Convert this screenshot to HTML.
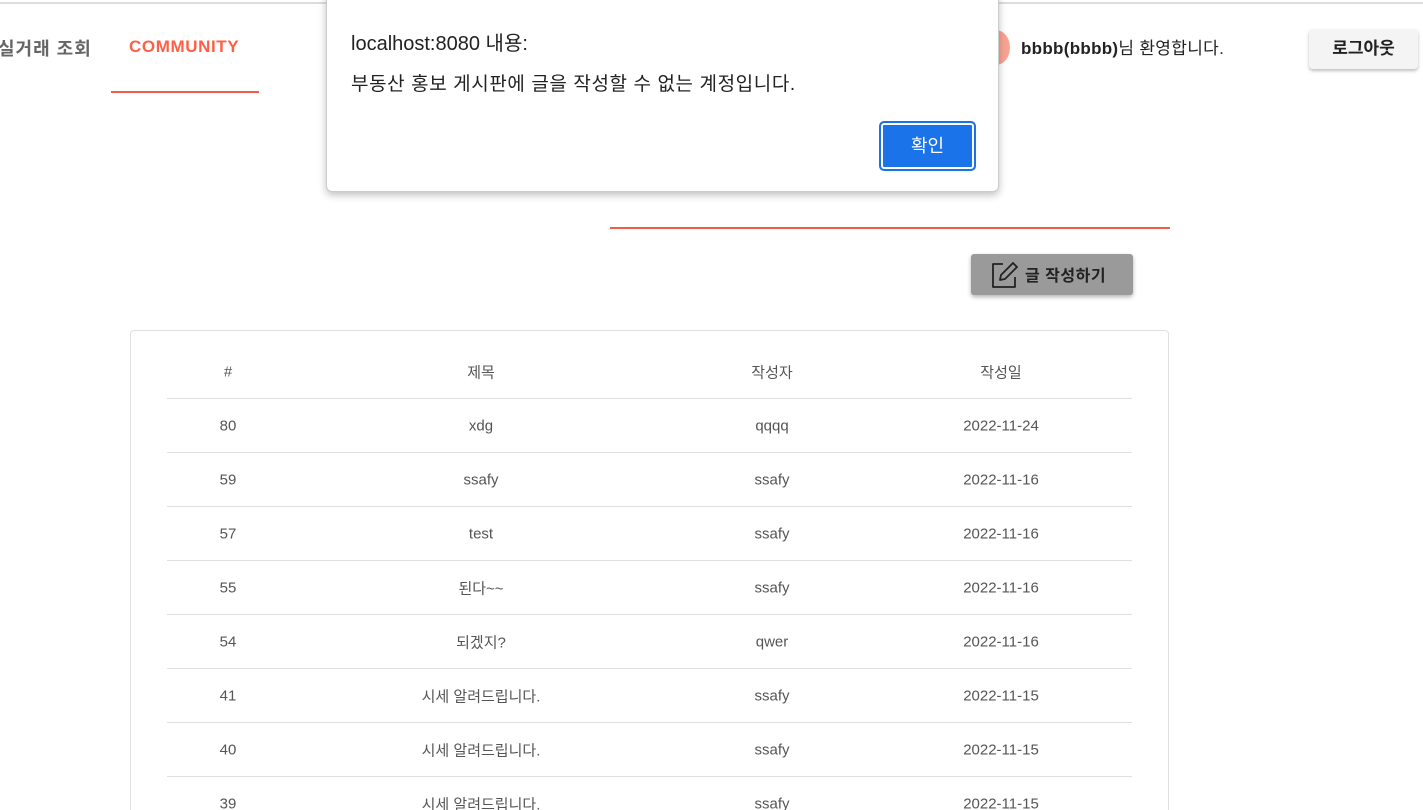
<!DOCTYPE html>
<html><head><meta charset="utf-8"><style>
*{margin:0;padding:0;box-sizing:border-box}
html{width:1423px;height:810px;overflow:hidden}
body{width:1423px;height:810px;overflow:hidden;background:#fff;font-family:"Liberation Sans","Noto Sans CJK KR",sans-serif;position:relative;color:#555}
.abs{position:absolute}
.row{position:absolute;left:167px;width:965px;height:54px;border-bottom:1px solid #e0e0e0;font-size:15px;color:#555}
.row span{position:absolute;top:50%;transform:translate(-50%,-50%);white-space:nowrap}
</style></head><body>
<div class="abs" style="left:0;top:2px;width:1423px;height:2px;background:#ddd"></div>
<div class="abs" style="left:-2px;top:35px;font-size:18px;font-weight:bold;color:#666;letter-spacing:1px">실거래 조회</div>
<div class="abs" style="left:129px;top:37px;font-size:17px;font-weight:bold;color:#ff5f45;letter-spacing:0.6px">COMMUNITY</div>
<div class="abs" style="left:111px;top:91px;width:148px;height:2px;background:#f55c43"></div>
<div class="abs" style="left:982px;top:30px;width:28px;height:35px;border-radius:50%;background:#f9a493"></div>
<div class="abs" style="left:1021px;top:34px;font-size:17px;color:#222;letter-spacing:0.3px"><b>bbbb(bbbb)</b>님 환영합니다.</div>
<div class="abs" style="left:1309px;top:29px;width:109px;height:40px;background:#f4f4f4;border-radius:4px;box-shadow:0 2px 3px rgba(0,0,0,.25);font-size:17px;font-weight:bold;color:#222;text-align:center;line-height:40px">로그아웃</div>
<div class="abs" style="left:610px;top:227px;width:560px;height:2px;background:#f55c43"></div>
<div class="abs" style="left:971px;top:254px;width:162px;height:41px;background:#9a9a9a;border-radius:3px;box-shadow:0 2px 4px rgba(0,0,0,.3);color:#222;font-size:16px;font-weight:bold">
<svg class="abs" style="left:19px;top:6px" width="30" height="30" viewBox="0 0 30 30" fill="none" stroke="#222" stroke-width="1.8" stroke-linejoin="round"><path d="M13 4H3v23h22V17"/><path d="M23 3l4 4-12 12-5 1 1-5z"/></svg>
<span class="abs" style="left:54px;top:8px;letter-spacing:0.5px">글 작성하기</span></div>
<div class="abs" style="left:130px;top:330px;width:1039px;height:490px;border:1px solid #e0e0e0;border-radius:4px"></div>
<div class="row" style="top:345px"><span style="left:61px">#</span><span style="left:314px">제목</span><span style="left:605px">작성자</span><span style="left:834px">작성일</span></div>
<div class="row" style="top:399px"><span style="left:61px">80</span><span style="left:314px">xdg</span><span style="left:605px">qqqq</span><span style="left:834px">2022-11-24</span></div>
<div class="row" style="top:453px"><span style="left:61px">59</span><span style="left:314px">ssafy</span><span style="left:605px">ssafy</span><span style="left:834px">2022-11-16</span></div>
<div class="row" style="top:507px"><span style="left:61px">57</span><span style="left:314px">test</span><span style="left:605px">ssafy</span><span style="left:834px">2022-11-16</span></div>
<div class="row" style="top:561px"><span style="left:61px">55</span><span style="left:314px">된다~~</span><span style="left:605px">ssafy</span><span style="left:834px">2022-11-16</span></div>
<div class="row" style="top:615px"><span style="left:61px">54</span><span style="left:314px">되겠지?</span><span style="left:605px">qwer</span><span style="left:834px">2022-11-16</span></div>
<div class="row" style="top:669px"><span style="left:61px">41</span><span style="left:314px">시세 알려드립니다.</span><span style="left:605px">ssafy</span><span style="left:834px">2022-11-15</span></div>
<div class="row" style="top:723px"><span style="left:61px">40</span><span style="left:314px">시세 알려드립니다.</span><span style="left:605px">ssafy</span><span style="left:834px">2022-11-15</span></div>
<div class="row" style="top:777px;border-bottom:none"><span style="left:61px">39</span><span style="left:314px">시세 알려드립니다.</span><span style="left:605px">ssafy</span><span style="left:834px">2022-11-15</span></div>
<div class="abs" style="left:326px;top:-5px;width:673px;height:197px;background:#fff;border:1px solid #ccc;border-radius:0 0 6px 6px;box-shadow:0 3px 8px rgba(0,0,0,.25);color:#222">
<div class="abs" style="left:24px;top:31px;font-size:20px">localhost:8080 내용:</div>
<div class="abs" style="left:24px;top:73px;font-size:19px;letter-spacing:0.6px">부동산 홍보 게시판에 글을 작성할 수 없는 계정입니다.</div>
<div class="abs" style="left:552px;top:125px;width:97px;height:50px;background:#1a73e8;border:2px solid #1a73e8;box-shadow:inset 0 0 0 2px #fff;border-radius:5px;color:#fff;font-size:18px;text-align:center;line-height:46px">확인</div>
</div>
</body></html>
